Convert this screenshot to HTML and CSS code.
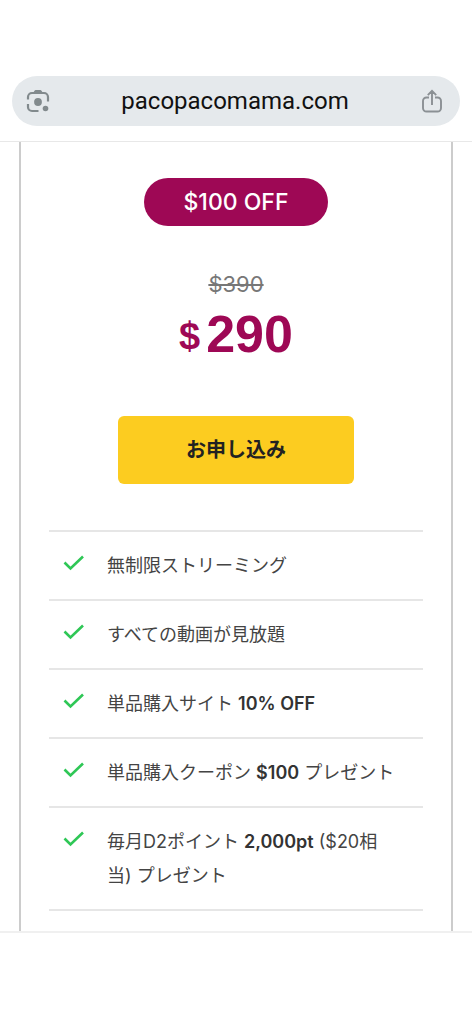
FILE: index.html
```html
<!DOCTYPE html>
<html lang="ja">
<head>
<meta charset="utf-8">
<meta name="viewport" content="width=device-width, initial-scale=1">
<title>pacopacomama.com</title>
<link rel="stylesheet" href="styles.css">
</head>
<body>
<svg class="defs" aria-hidden="true">
  <symbol id="check" viewBox="0 0 22 16">
    <path d="M1.500 7.500 7.500 13.500 20 1.500" fill="none" stroke="#2fc756" stroke-width="2.600"/>
  </symbol>
</svg>
<header class="browser-bar">
  <div class="address">
    <button class="icon-button" type="button" aria-label="画像検索">
      <svg width="24" height="24" viewBox="0 0 24 24" fill="none" stroke="#828a8d" stroke-width="2.2">
        <path d="M2 10.500V8a4 4 0 0 1 4-4h12a4 4 0 0 1 4 4v4.500M2 15v3a4 4 0 0 0 4 4h6.500"/>
        <path d="M7 4 8.500 1.700Q8.900 1 9.700 1h4.600q.8 0 1.200.7L17 4z" fill="#828a8d" stroke="none"/>
        <circle cx="12" cy="13" r="3.900" fill="#828a8d" stroke="none"/>
        <circle cx="19.500" cy="19.500" r="2.800" fill="#828a8d" stroke="none"/>
      </svg>
    </button>
    <span class="domain">pacopacomama.com</span>
    <button class="icon-button" type="button" aria-label="共有">
      <svg width="24" height="24" viewBox="0 0 24 24" fill="none" stroke="#8b9094" stroke-width="1.900">
        <path d="M9 8.500H6.500a3.500 3.500 0 0 0-3.500 3.500v7a3.500 3.500 0 0 0 3.500 3.500h11a3.500 3.500 0 0 0 3.500-3.500v-7a3.500 3.500 0 0 0-3.500-3.500H15M12 16V2M7.800 6.100 12 1.900l4.200 4.200"/>
      </svg>
    </button>
  </div>
</header>
<main class="page">
  <section class="plan">
    <p class="discount">$100 OFF</p>
    <p class="old-price"><s>$390</s></p>
    <p class="price"><span class="currency">$</span>290</p>
    <button class="apply" type="button">お申し込み</button>
    <ul class="features">
      <li><svg class="check"><use href="#check"/></svg><span>無制限ストリーミング</span></li>
      <li><svg class="check"><use href="#check"/></svg><span>すべての動画が見放題</span></li>
      <li><svg class="check"><use href="#check"/></svg><span>単品購入サイト <b>10% OFF</b></span></li>
      <li><svg class="check"><use href="#check"/></svg><span>単品購入クーポン <b>$100</b> プレゼント</span></li>
      <li><svg class="check"><use href="#check"/></svg><span>毎月D2ポイント <b>2,000pt</b> ($20相当) プレゼント</span></li>
    </ul>
  </section>
</main>
</body>
</html>
```
FILE: styles.css
```css
* { box-sizing: border-box; }
body {
  margin: 0;
  background: #fff;
  color: #444;
  font-family: Inter, "Noto Sans CJK JP", sans-serif;
}
p, ul { margin: 0; padding: 0; }
button { border: 0; font: inherit; cursor: pointer; }
.defs { display: none; }
.browser-bar {
  padding: 76px 12px 15px;
  border-bottom: 1px solid #e8e8e8;
}
.address {
  display: flex;
  align-items: center;
  justify-content: space-between;
  height: 50px;
  padding: 0 16px 0 14px;
  border-radius: 25px;
  background: #e5e9ec;
}
.icon-button {
  display: flex;
  padding: 0;
  background: none;
}
.domain {
  color: #111;
  font-family: Roboto, sans-serif;
  font-size: 24px;
  line-height: 32px;
}
.page {
  padding: 0 19px;
  border-bottom: 2px solid #f0f0f0;
}
.plan {
  display: flex;
  flex-direction: column;
  align-items: center;
  padding: 36px 28px 20px;
  border: solid #ccc;
  border-width: 0 2px;
}
.discount {
  padding: 0 40px;
  border-radius: 24px;
  background: #9e0855;
  color: #fff;
  font-size: 23px;
  font-weight: 500;
  line-height: 48px;
}
.old-price {
  margin-top: 42px;
  color: #777;
  font-size: 22px;
  line-height: 32px;
}
.price {
  display: flex;
  align-items: center;
  gap: 6px;
  margin-top: 4px;
  color: #9e0855;
  font-family: "Liberation Sans", Arial, sans-serif;
  font-size: 52px;
  font-weight: 700;
  line-height: 56px;
}
.currency {
  padding-top: 4px;
  font-size: 38px;
}
.apply {
  width: 63%;
  margin-top: 52px;
  padding: 0;
  border-radius: 6px;
  background: #fccc20;
  color: #222;
  font-size: 20px;
  font-weight: 700;
  line-height: 68px;
}
.features {
  align-self: stretch;
  margin-top: 46px;
  border-top: 2px solid #e6e6e6;
  list-style: none;
  font-size: 18px;
  line-height: 34px;
}
.features li {
  display: flex;
  gap: 22px;
  padding: 17px 24px 16px 14px;
  border-bottom: 2px solid #e6e6e6;
}
.features li span { flex: 1; }
.features b { color: #333; font-weight: 600; }
.check {
  flex: none;
  width: 22px;
  height: 16px;
  margin-top: 6px;
}
```
